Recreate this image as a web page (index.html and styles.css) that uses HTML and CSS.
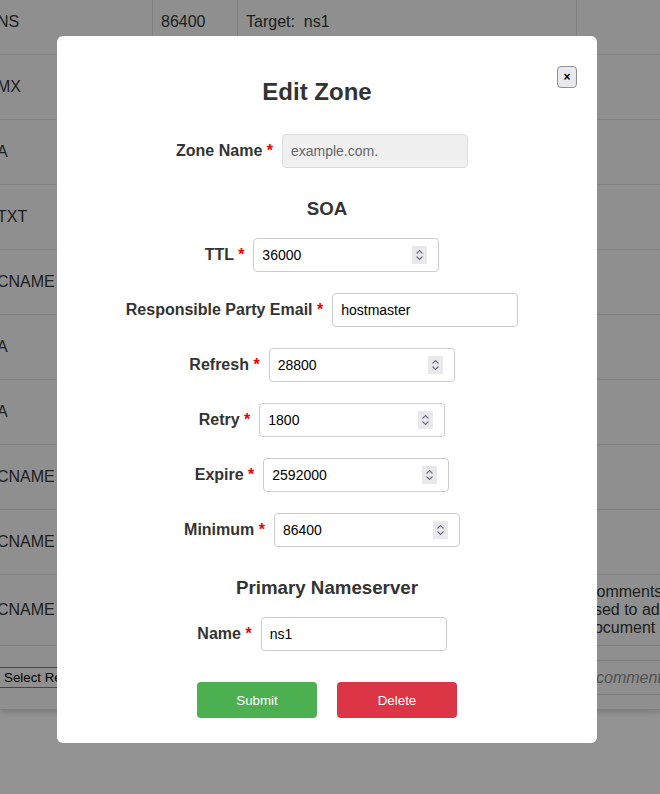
FILE: index.html
```html
<!DOCTYPE html>
<html lang="en">
<head>
<meta charset="utf-8">
<title>Edit Zone</title>
<link rel="stylesheet" href="styles.css">
</head>
<body>
<div class="page">
  <div class="records-wrap">
    <table class="records">
      <colgroup>
        <col class="c-type"><col class="c-ttl"><col class="c-data"><col class="c-comment">
      </colgroup>
      <tbody>
        <tr><td>NS</td><td>86400</td><td>Target:&nbsp; ns1</td><td></td></tr>
        <tr><td>MX</td><td>3600</td><td>Mail: mail</td><td></td></tr>
        <tr><td>A</td><td>3600</td><td>192.0.2.1</td><td></td></tr>
        <tr><td>TXT</td><td>3600</td><td>v=spf1 mx -all</td><td></td></tr>
        <tr><td>CNAME</td><td>3600</td><td>Alias: www</td><td></td></tr>
        <tr><td>A</td><td>3600</td><td>192.0.2.2</td><td></td></tr>
        <tr><td>A</td><td>3600</td><td>192.0.2.3</td><td></td></tr>
        <tr><td>CNAME</td><td>3600</td><td>Alias: ftp</td><td></td></tr>
        <tr><td>CNAME</td><td>3600</td><td>Alias: blog</td><td></td></tr>
        <tr class="tall"><td>CNAME</td><td>3600</td><td>Alias: docs</td><td class="comment">Comments are<br>used to add notes<br>document the record</td></tr>
        <tr class="new-row">
          <td><select class="type-select"><option>Select Record Type</option></select></td>
          <td></td><td></td>
          <td><input class="comment-input" type="text" placeholder="comment"></td>
        </tr>
      </tbody>
    </table>
  </div>
</div>

<div class="overlay">
  <div class="modal">
    <button class="close" type="button">×</button>
    <h2 class="title">Edit Zone</h2>
    <form class="zone-form">
      <div class="row">
        <label>Zone Name <span class="req">*</span></label>
        <input class="field readonly" type="text" value="example.com." readonly>
      </div>

      <h3 class="section">SOA</h3>

      <div class="row">
        <label>TTL <span class="req">*</span></label>
        <div class="field num"><input class="num-input" type="text" value="36000"><span class="spin"><svg width="15" height="18" viewBox="0 0 15 18"><path d="M4.5 7.5 L7.5 4.5 L10.5 7.5 M4.5 10.5 L7.5 13.5 L10.5 10.5" fill="none" stroke="#6e6e7a" stroke-width="1.1"/></svg></span></div>
      </div>
      <div class="row">
        <label>Responsible Party Email <span class="req">*</span></label>
        <input class="field" type="text" value="hostmaster">
      </div>
      <div class="row">
        <label>Refresh <span class="req">*</span></label>
        <div class="field num"><input class="num-input" type="text" value="28800"><span class="spin"><svg width="15" height="18" viewBox="0 0 15 18"><path d="M4.5 7.5 L7.5 4.5 L10.5 7.5 M4.5 10.5 L7.5 13.5 L10.5 10.5" fill="none" stroke="#6e6e7a" stroke-width="1.1"/></svg></span></div>
      </div>
      <div class="row">
        <label>Retry <span class="req">*</span></label>
        <div class="field num"><input class="num-input" type="text" value="1800"><span class="spin"><svg width="15" height="18" viewBox="0 0 15 18"><path d="M4.5 7.5 L7.5 4.5 L10.5 7.5 M4.5 10.5 L7.5 13.5 L10.5 10.5" fill="none" stroke="#6e6e7a" stroke-width="1.1"/></svg></span></div>
      </div>
      <div class="row">
        <label>Expire <span class="req">*</span></label>
        <div class="field num"><input class="num-input" type="text" value="2592000"><span class="spin"><svg width="15" height="18" viewBox="0 0 15 18"><path d="M4.5 7.5 L7.5 4.5 L10.5 7.5 M4.5 10.5 L7.5 13.5 L10.5 10.5" fill="none" stroke="#6e6e7a" stroke-width="1.1"/></svg></span></div>
      </div>
      <div class="row">
        <label>Minimum <span class="req">*</span></label>
        <div class="field num"><input class="num-input" type="text" value="86400"><span class="spin"><svg width="15" height="18" viewBox="0 0 15 18"><path d="M4.5 7.5 L7.5 4.5 L10.5 7.5 M4.5 10.5 L7.5 13.5 L10.5 10.5" fill="none" stroke="#6e6e7a" stroke-width="1.1"/></svg></span></div>
      </div>

      <h3 class="section">Primary Nameserver</h3>

      <div class="row">
        <label>Name <span class="req">*</span></label>
        <input class="field" type="text" value="ns1">
      </div>

      <div class="actions">
        <button class="btn submit" type="button">Submit</button>
        <button class="btn delete" type="button">Delete</button>
      </div>
    </form>
  </div>
</div>
</body>
</html>
```

FILE: styles.css
```css
html, body {
  margin: 0;
  padding: 0;
}

body {
  background: #f5f5f5;
  font-family: "Liberation Sans", Arial, sans-serif;
  color: #333;
}

.page {
  width: 100%;
  height: 100vh;
  overflow: hidden;
}

.records-wrap {
  margin-top: -10px;
  background: #efefef;
  box-shadow: 0 2px 6px rgba(0, 0, 0, 0.18);
}

.records {
  margin-left: -11px;
  table-layout: fixed;
  width: 820px;
  border-collapse: separate;
  border-spacing: 0;
  font-size: 16px;
  color: #333;
}

.c-type { width: 164px; }
.c-ttl { width: 85px; }
.c-data { width: 339px; }
.c-comment { width: 232px; }

.records tr { height: 65px; }
.records tr.tall { height: 71px; }
.records tr.new-row { height: 64px; }

.records td {
  padding: 0 8px;
  vertical-align: middle;
  border-bottom: 1px solid #d6d6d6;
  border-right: 1px solid #d6d6d6;
  line-height: 18px;
  white-space: nowrap;
}

.type-select {
  margin-left: 0;
  font-family: "Liberation Sans", Arial, sans-serif;
  font-size: 13.33px;
  height: 21px;
  width: 150px;
  padding: 0 2px;
  border: 1px solid #767676;
  border-radius: 0;
  background: #efefef;
  color: #000;
}

.comment-input {
  display: block;
  width: 100%;
  height: 35px;
  box-sizing: border-box;
  border: 1px solid #cfcfcf;
  background: transparent;
  padding: 0 10px;
  font-family: "Liberation Sans", Arial, sans-serif;
  font-size: 16px;
}

.comment-input::placeholder {
  font-style: italic;
  color: #888;
}

/* Modal */
.overlay {
  position: fixed;
  inset: 0;
  background: rgba(0, 0, 0, 0.4);
}

.modal {
  width: 540px;
  box-sizing: border-box;
  margin: 36px 0 0 57px;
  padding: 20px 20px 25px;
  background: #fff;
  border-radius: 6px;
}

.close {
  float: right;
  margin-top: 10px;
  width: 20px;
  height: 22px;
  padding: 0;
  background: #e9e9ed;
  border: 1px solid #8f8f9d;
  border-radius: 4px;
  color: #000;
  font-family: "Liberation Sans", Arial, sans-serif;
  font-size: 12px;
  font-weight: bold;
  line-height: 1;
}

.title {
  margin: 22px 0 28px;
  text-align: center;
  font-size: 24px;
  font-weight: bold;
  color: #333;
}

.section {
  margin: 30px 0 18px;
  text-align: center;
  font-size: 18.72px;
  font-weight: bold;
  color: #333;
}

.row {
  display: flex;
  justify-content: center;
  align-items: center;
  gap: 9px;
  padding-right: 10px;
  margin-bottom: 21px;
}

.row label {
  font-size: 16px;
  font-weight: bold;
  color: #333;
  white-space: nowrap;
}

.req {
  color: #e00;
}

.field {
  width: 186px;
  height: 34px;
  box-sizing: border-box;
  border: 1px solid #ccc;
  border-radius: 4px;
  padding: 0 8px;
  background: #fff;
  font-family: "Liberation Sans", Arial, sans-serif;
  font-size: 14px;
  color: #000;
}

.field.readonly {
  background: #f0f0f0;
  border-color: #ddd;
  color: #666;
}

.field.num {
  display: flex;
  align-items: center;
}

.num-input {
  flex: 1;
  min-width: 0;
  border: 0;
  padding: 0;
  margin: 0;
  background: transparent;
  font-family: "Liberation Sans", Arial, sans-serif;
  font-size: 14px;
  color: #000;
  outline: none;
}

.spin {
  display: block;
  width: 15px;
  height: 18px;
  margin-right: 3px;
  background: #e9e9ed;
}

.spin svg {
  display: block;
}

.actions {
  display: flex;
  justify-content: center;
  gap: 20px;
  margin-top: 31px;
}

.btn {
  width: 120px;
  height: 36px;
  border: 0;
  border-radius: 4px;
  color: #fff;
  font-family: "Liberation Sans", Arial, sans-serif;
  font-size: 13.33px;
}

.btn.submit { background: #4caf50; }
.btn.delete { background: #dc3545; }
```
